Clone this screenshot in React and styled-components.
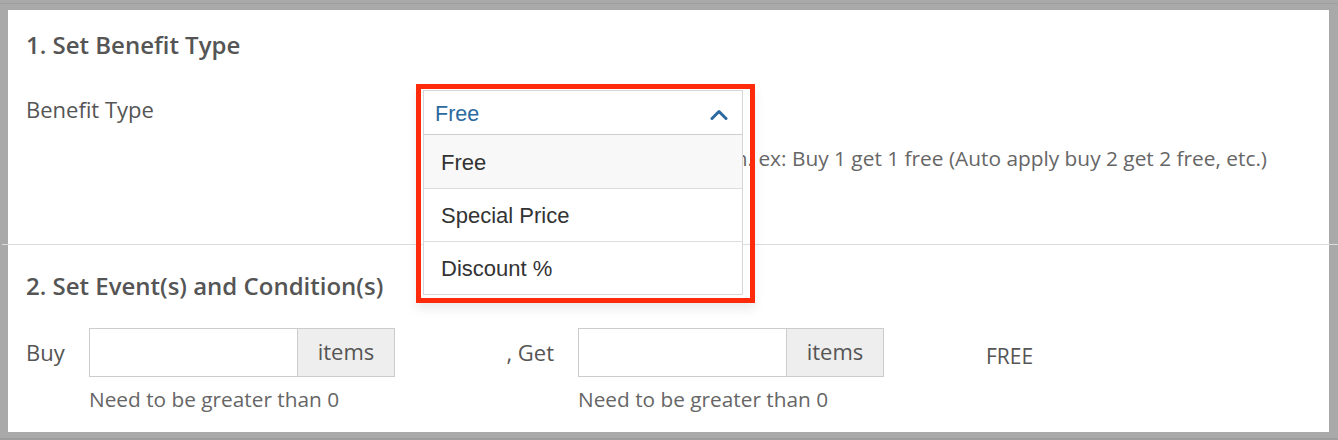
import React from "react";
import styled, { createGlobalStyle } from "styled-components";

const GlobalStyle = createGlobalStyle`
  html, body {
    margin: 0;
    padding: 0;
    background: #a9a9a9;
  }
  * {
    box-sizing: border-box;
  }
`;

const Frame = styled("div")`
  width: 1338px;
  height: 440px;
  padding: 10px 9px 8px 8px;
  background: #a9a9a9;
  box-shadow: inset 0 -2px 0 #9d9d9d, inset 0 3px 0 #a9a9a9, inset 0 4px 0 #9f9f9f;
  font-family: "Open Sans", "DejaVu Sans", sans-serif;
  overflow: hidden;
`;

const Panel = styled("div")`
  height: 422px;
  background: #fff;
  display: flex;
  flex-direction: column;
`;

const Section = styled("section")`
  padding: ${(p) => p.$top}px 18px 0 18px;
  height: ${(p) => p.$height}px;
`;

const Divider = styled("div")`
  height: 1px;
  background: #dcdcdc;
  margin: 0 -9px 0 -6px;
`;

const Heading = styled("h2")`
  margin: 0;
  font-size: 24px;
  line-height: 32px;
  font-weight: 600;
  color: #555;
`;

const FieldRow = styled("div")`
  display: flex;
  align-items: flex-start;
  margin-top: 29px;
`;

const Label = styled("div")`
  width: 397px;
  padding-top: 4px;
  font-size: 22px;
  line-height: 30px;
  color: #555;
`;

const Control = styled("div")`
  flex: 1;
  display: flex;
  flex-direction: column;
`;

const Note = styled("div")`
  font-size: ${(p) => p.$size || 21}px;
  line-height: 28px;
  color: #666;
  margin-top: ${(p) => p.$gap || 8}px;
  white-space: nowrap;
`;

const SelectWrap = styled("div")`
  position: relative;
  width: 320px;
`;

const SelectHead = styled("div")`
  height: 45px;
  border: 1px solid #d6d6d6;
  border-bottom-color: #cfcfcf;
  display: flex;
  align-items: center;
  justify-content: space-between;
  padding: 3px 14px 0 11px;
  font-family: "Liberation Sans", Arial, sans-serif;
  font-size: 21.5px;
  color: #2c6aa0;
  background: #fff;
`;

const Options = styled("ul")`
  position: absolute;
  left: 0;
  right: 0;
  top: 45px;
  margin: 0;
  padding: 0;
  list-style: none;
  background: #fff;
  border: 1px solid #d6d6d6;
  border-top: none;
  z-index: 2;
`;

const Option = styled("li")`
  height: 53px;
  display: flex;
  align-items: center;
  padding: 2px 0 0 17px;
  font-family: "Liberation Sans", Arial, sans-serif;
  font-size: 22px;
  color: #333;
  background: ${(p) => (p.$active ? "#f8f8f8" : "#fff")};
  border-top: ${(p) => (p.$first ? "none" : "1px solid #dedede")};
`;

const Highlight = styled("div")`
  position: absolute;
  left: -7px;
  top: -6px;
  width: 339px;
  height: 219px;
  border: 5px solid #ff2a0a;
  box-shadow: 0 6px 10px rgba(0, 0, 0, 0.08);
  z-index: 3;
  pointer-events: none;
`;

const Fields = styled("div")`
  display: flex;
  align-items: flex-start;
  margin-top: 26px;
`;

const RowLabel = styled("div")`
  width: ${(p) => p.$width}px;
  padding-right: ${(p) => p.$pad || 0}px;
  text-align: ${(p) => (p.$right ? "right" : "left")};
  font-size: 22px;
  line-height: 49px;
  color: #555;
  white-space: nowrap;
`;

const Group = styled("div")`
  display: flex;
  flex-direction: column;
  width: 306px;
`;

const InputBox = styled("div")`
  display: flex;
  height: 49px;
  border: 1px solid #cccccc;
`;

const TextInput = styled("input")`
  width: 207px;
  border: none;
  outline: none;
  padding: 0 10px;
  font-family: "Open Sans", sans-serif;
  font-size: 20px;
  background: #fff;
`;

const Addon = styled("div")`
  flex: 1;
  display: flex;
  align-items: center;
  justify-content: center;
  padding-bottom: 3px;
  background: #eeeeee;
  border-left: 1px solid #cccccc;
  font-size: 22px;
  color: #555;
`;

const Result = styled("div")`
  padding-left: 102px;
  font-size: 21px;
  line-height: 49px;
  margin-top: 4px;
  color: #555;
`;

const Chevron = () => (
  <svg width="18" height="11" viewBox="0 0 18 11">
    <path
      d="M2 9.5 L9 2.5 L16 9.5"
      fill="none"
      stroke="#2c6aa0"
      strokeWidth="3"
      strokeLinecap="round"
      strokeLinejoin="round"
    />
  </svg>
);

const options = ["Free", "Special Price", "Discount %"];

const InputGroup = () => (
  <Group>
    <InputBox>
      <TextInput type="text" />
      <Addon>items</Addon>
    </InputBox>
    <Note $size={20.8}>Need to be greater than 0</Note>
  </Group>
);

export default function App() {
  return (
    <>
      <GlobalStyle />
      <Frame>
        <Panel>
          <Section $top={19} $height={234}>
            <Heading>1. Set Benefit Type</Heading>
            <FieldRow>
              <Label>Benefit Type</Label>
              <Control>
                <SelectWrap>
                  <SelectHead>
                    <span>Free</span>
                    <Chevron />
                  </SelectHead>
                  <Options>
                    {options.map((o, i) => (
                      <Option key={o} $active={i === 0} $first={i === 0}>
                        {o}
                      </Option>
                    ))}
                  </Options>
                  <Highlight />
                </SelectWrap>
                <Note $gap={9} $size={20.85}>
                  Give a reward upon the condition. ex: Buy 1 get 1 free (Auto
                  apply buy 2 get 2 free, etc.)
                </Note>
              </Control>
            </FieldRow>
          </Section>
          <Divider />
          <Section $top={25} $height={187}>
            <Heading>2. Set Event(s) and Condition(s)</Heading>
            <Fields>
              <RowLabel $width={63}>Buy</RowLabel>
              <InputGroup />
              <RowLabel $width={183} $pad={24} $right>
                , Get
              </RowLabel>
              <InputGroup />
              <Result>FREE</Result>
            </Fields>
          </Section>
        </Panel>
      </Frame>
    </>
  );
}
